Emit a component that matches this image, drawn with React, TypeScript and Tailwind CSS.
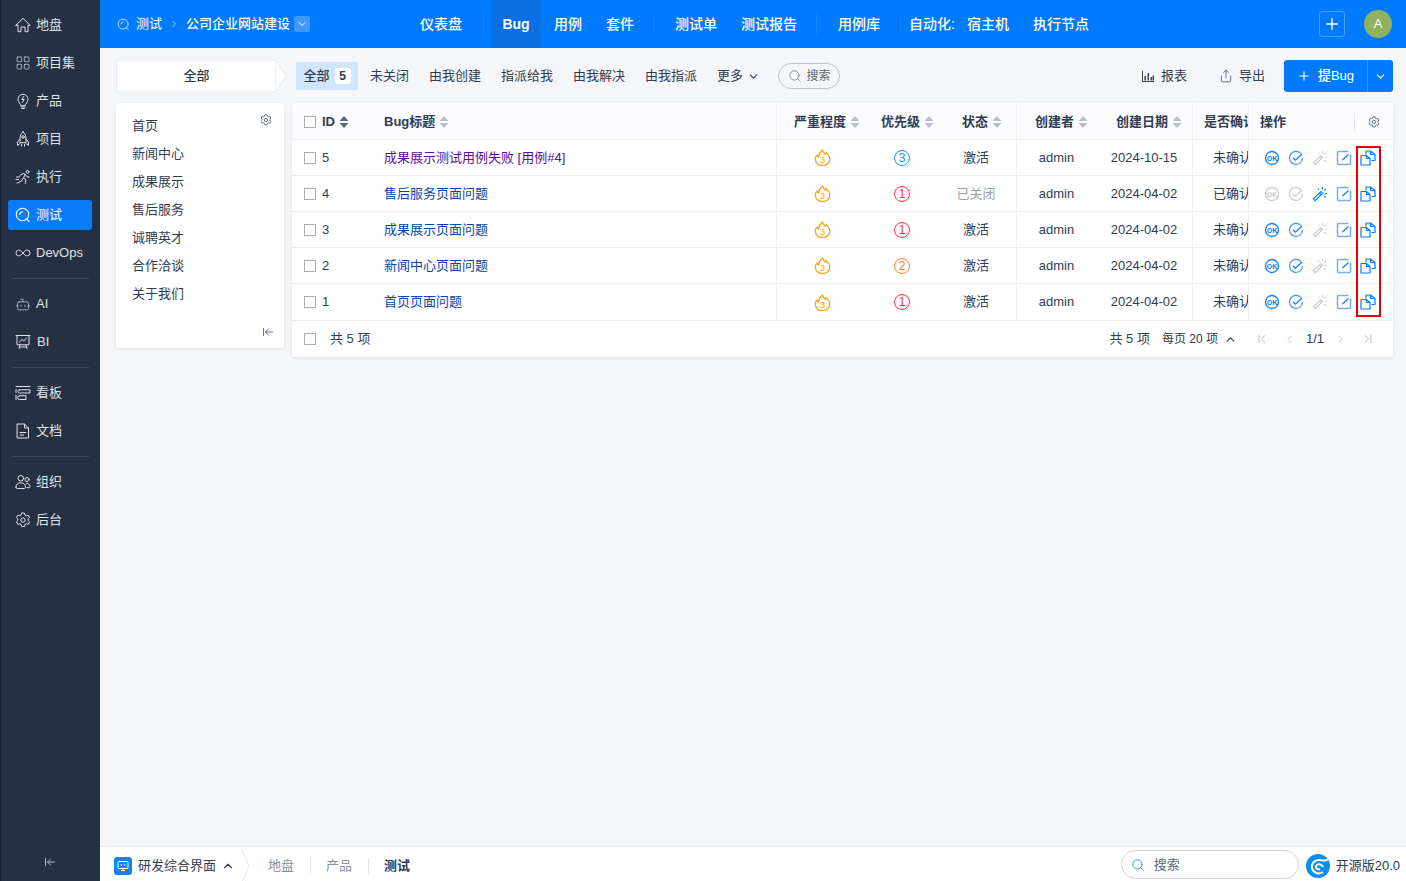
import React from "react";
import {
  LayoutGrid, Bot, Search,
  ChevronDown, ChevronUp, ChevronRight, ChevronLeft, ChevronFirst, ChevronLast, Plus, Share, ArrowLeftToLine,
} from "lucide-react";

const S = ({ children, w = 16 }: { children: React.ReactNode; w?: number }) => (
  <svg width={w} height="16" viewBox={`0 0 ${w} 16`} fill="none" stroke="currentColor" strokeWidth="1" strokeLinejoin="round" strokeLinecap="round">
    {children}
  </svg>
);
const Home = () => <S><path d="M.8 8.300L8 1.300l7.200 7H13v6.400h-3V10H6v4.700H3V8.300z" /></S>;
const Bulb = () => <S><path d="M5.800 12.300c0-1.700-2.800-2.700-2.800-6a5 5 0 0110 0c0 3.300-2.800 4.300-2.800 6zM6 14h4M6.800 15.500h2.400M8.700 3.500L6.800 6.500h2.400L7.300 9.300" /></S>;
const RocketUp = () => <S><path d="M8 .8c2 1.700 3 4 3 6.700v4.200H5V7.500C5 4.800 6 2.500 8 .8zM5 8l-2.500 3v3.300l2.500-1.600M11 8l2.500 3v3.300L11 12.700M6.500 13.500v1.700M9.500 13.500v1.700" /><circle cx="8" cy="6" r="1.300" /></S>;
const Running = () => <S><circle cx="12.500" cy="2.800" r="1.400" /><path d="M5 6.500l3-2 2.300.800L8.500 9l2.500 1.800-.8 3.700M8 9.500L6.500 12l-4.500 2.200M10.300 5.500l1.500 2.200 2.700.5M1.500 8h3M1 10.500h2.500" /></S>;
const Kanban = () => <S><path d="M1 1.500h14M1 4.500v3M4.500 4.800H15V8H4.500a1.600 1.600 0 010-3.200zM1 10v4.500M4.500 10.700H11v3.800H4.500a1.900 1.900 0 010-3.800z" /></S>;
const Loop = () => <S w={17}><path d="M8.500 8c-1.500-2-3-3-4.500-3a3 3 0 000 6c1.500 0 3-1 4.500-3zm0 0c1.500-2 3-3 4.500-3a3 3 0 010 6c-1.500 0-3-1-4.500-3z" /></S>;
const Bi = () => <S><path d="M1 1.500h14M2 1.500v9.300h12V1.500M5 10.800L4 14.500M11 10.800l1 3.700M4.500 13h7M4.500 8l2.500-2.500 1.800 1.500 2.700-3" /></S>;
const Doc = () => <S><path d="M2.500 1h7l4 4v10h-11zM9.500 1v4h4M5 9.500h6M5 12h3.500" /></S>;
const People = () => <S><circle cx="5.800" cy="4.300" r="2.800" /><circle cx="12" cy="5.500" r="2" /><path d="M1 13.200c0-3 2-4.400 4.800-4.400s4.800 1.400 4.800 4.400c0 .8-.6 1.300-1.300 1.300h-7C1.600 14.500 1 14 1 13.200zM11.500 9.300c2 0 3.500 1 3.500 3 0 .8-.5 1.300-1.300 1.300h-1.500" /></S>;
const Gear = ({ size = 16 }: { size?: number }) => (
  <svg width={size} height={size} viewBox="0 0 16 16" fill="none" stroke="currentColor" strokeWidth={size < 14 ? 1.200 : 1} strokeLinejoin="round">
    <path d="M6.600 1h2.800l.5 2 1.300.8 2-.6 1.400 2.400-1.500 1.400v1.500l1.500 1.400-1.400 2.400-2-.6-1.300.8-.5 2H6.600l-.5-2-1.300-.8-2 .6-1.400-2.400 1.500-1.400V7.000L1.400 5.600l1.400-2.400 2 .6 1.300-.8z" />
    <circle cx="8" cy="8" r="2.200" />
  </svg>
);
const Bug = ({ c = 16 }: { c?: number }) => (
  <svg width={c} height={c} viewBox="0 0 16 16" fill="none" stroke="currentColor" strokeWidth="1.100" strokeLinecap="round">
    <circle cx="7.500" cy="7.500" r="6.200" />
    <path d="M4.800 7.500a2.800 2.800 0 012.700-2.700M11 11.500l3 3" />
  </svg>
);

type Item = { t: string; i?: React.ReactNode; a?: boolean; d?: boolean };
const nav: Item[] = [
  { t: "地盘", i: <Home /> },
  { t: "项目集", i: <LayoutGrid size={16} strokeWidth={1} /> },
  { t: "产品", i: <Bulb /> },
  { t: "项目", i: <RocketUp /> },
  { t: "执行", i: <Running /> },
  { t: "测试", i: <Bug />, a: true },
  { t: "DevOps", i: <Loop /> },
  { t: "", d: true },
  { t: "AI", i: <Bot size={17} strokeWidth={1} /> },
  { t: "BI", i: <Bi /> },
  { t: "", d: true },
  { t: "看板", i: <Kanban /> },
  { t: "文档", i: <Doc /> },
  { t: "", d: true },
  { t: "组织", i: <People /> },
  { t: "后台", i: <Gear /> },
];

const Sort = ({ dark }: { dark?: boolean }) => (
  <svg width="10" height="12" viewBox="0 0 10 12" className="shrink-0">
    <path d="M5 0l4.500 5H.500z" fill={dark ? "#5a6578" : "#b9bfc9"} />
    <path d="M5 12L.500 7h9z" fill={dark ? "#5a6578" : "#b9bfc9"} />
  </svg>
);

const Flame = () => (
  <svg width="17" height="17" viewBox="0 0 17 17" fill="none" stroke="#ff9f0a" strokeWidth="1.200" strokeLinejoin="round">
    <path d="M8.600.8c.4 2.400 1.700 3.200 2.800 4.500.5-.5.700-1 .7-1.700 2 1.700 3.700 3.900 3.700 6.400 0 3.800-3.200 6.500-7.300 6.500S1.200 13.800 1.200 10.300c0-2 1-3.400 2.200-4.400 0 1 .3 1.600.9 2.100C4.800 5.500 6.600 2.600 8.600.8z" />
    <text x="8.500" y="13.700" textAnchor="middle" fontSize="9" fill="#ff9f0a" stroke="none" fontFamily="Liberation Sans">3</text>
  </svg>
);
const Pri = ({ n }: { n: number }) => {
  const c = n === 3 ? "border-[#1c8df0] text-[#1c8df0]" : n === 2 ? "border-[#f5821f] text-[#f5821f]" : "border-[#f33] text-[#f33]";
  return <span className={`flex h-4 w-4 items-center justify-center rounded-full border text-[12px] leading-none ${c}`}>{n}</span>;
};

const OkI = ({ on }: { on: boolean }) => (
  <svg width="16" height="16" viewBox="0 0 16 16" fill="none" stroke={on ? "#0c7dfa" : "#c6c9cf"} strokeWidth="1.300">
    <circle cx="8" cy="8" r="6.500" />
    <text x="8" y="10.500" textAnchor="middle" fontSize="7" fontWeight="700" fill={on ? "#0c7dfa" : "#c6c9cf"} stroke="none" fontFamily="Liberation Sans">OK</text>
  </svg>
);
const CheckI = ({ on }: { on: boolean }) => (
  <svg width="16" height="16" viewBox="0 0 16 16" fill="none" stroke={on ? "#0c7dfa" : "#c6c9cf"} strokeWidth="1.200">
    <path d="M12.800 3.500A6.500 6.500 0 1014.500 8" stroke={on ? "#3d97fb" : "#c6c9cf"} />
    <path d="M5 7.800l2.500 2.400L14 4" />
  </svg>
);
const Wand = ({ on }: { on: boolean }) => (
  <svg width="16" height="16" viewBox="0 0 16 16" fill="none" stroke={on ? "#0c7dfa" : "#c6c9cf"} strokeWidth="1.100">
    <path d="M1.200 12.800l7.800-7.300 1.700 1.700-7.500 7.500zM7.500 7l1.800 1.800M6 2.500l1 1.500M10.500 1v2.200M14 3l-1.700 1.500M15 7.500h-2.200M13.500 11.500L12 10" />
  </svg>
);
const Edit = () => (
  <svg width="16" height="16" viewBox="0 0 16 16" fill="none" strokeWidth="1.500">
    <path d="M12.500 1.500H2.500a1 1 0 00-1 1v11a1 1 0 001 1h11a1 1 0 001-1V4.500" stroke="#6eb2fb" />
    <path d="M6.500 10l6-5.500" stroke="#0c7dfa" strokeWidth="1.200" />
  </svg>
);
const Copy = () => (
  <svg width="16" height="16" viewBox="0 0 16 16" fill="none" stroke="#0c7dfa" strokeWidth="1.200" strokeLinejoin="round">
    <path d="M6 4.500V1h4.500L15 4.500V10.500h-3.500M10.500 1v3.500H15" />
    <path d="M1 5.500h5.500L10 8.500v6.500H1zM6.500 5.500v3H10" />
  </svg>
);

const rows = [
  { id: 5, t: "成果展示测试用例失败 [用例#4]", v: true, p: 3, s: "激活", d: "2024-10-15", c: "未确认" },
  { id: 4, t: "售后服务页面问题", p: 1, s: "已关闭", d: "2024-04-02", c: "已确认" },
  { id: 3, t: "成果展示页面问题", p: 1, s: "激活", d: "2024-04-02", c: "未确认" },
  { id: 2, t: "新闻中心页面问题", p: 2, s: "激活", d: "2024-04-02", c: "未确认" },
  { id: 1, t: "首页页面问题", p: 1, s: "激活", d: "2024-04-02", c: "未确认" },
];

const Box = () => <span className="h-3 w-3 shrink-0 border border-[#a9afba] bg-white" />;
const cols = "grid grid-cols-[84px_401px_91px_68px_81px_79px_97px_55px_1fr]";
const Sep = () => <span className="block h-5 w-px bg-[#1587fe]" />;

export default function App() {
  return (
    <div className="flex h-[881px] w-[1406px] overflow-hidden bg-[#f5f6f9] font-['Liberation_Sans','Noto_Sans_CJK_SC',sans-serif] text-[13px] text-[#313c52]">
      {/* sidebar */}
      <aside className="flex w-[100px] shrink-0 flex-col border-l border-[#1c2634] bg-[#253142] pt-[6px] text-[#dfe2e6]">
        {nav.map((n, i) =>
          n.d ? (
            <div key={i} className="mx-[11px] my-[6px] h-px bg-[#3e4959]" />
          ) : (
            <div key={i} className="flex h-[38px] items-center pl-[7px]">
              <div className={`flex h-[30px] w-[84px] items-center gap-[5px] rounded-[3px] pl-[7px] ${n.a ? "bg-[#0a7bfb] text-white" : ""}`}>
                <span className="flex w-4 justify-center">{n.i}</span>
                <span className={n.t === "BI" ? "pl-[1px]" : ""}>{n.t}</span>
              </div>
            </div>
          ),
        )}
        <div className="mt-auto flex h-[38px] items-center justify-center pr-[2px] text-[#b6bcc5]">
          <ArrowLeftToLine size={12} />
        </div>
      </aside>

      <div className="flex min-w-0 flex-1 flex-col">
        {/* top bar */}
        <header className="flex h-12 shrink-0 items-center bg-[#007afe] text-white">
          <div className="flex w-[320px] items-center pl-[17px]">
            <span className="text-[#dbe9ff]"><Bug c={13} /></span>
            <span className="ml-[6px]">测试</span>
            <ChevronRight size={12} className="ml-[6px] text-[#a9d0ff]" />
            <span className="ml-[6px] font-medium">公司企业网站建设</span>
            <span className="ml-[4px] flex h-4 w-4 items-center justify-center rounded-[2px] bg-[#3f99fe]"><ChevronDown size={12} /></span>
          </div>
          <nav className="flex h-full items-center text-[14px] font-medium">
            <span>仪表盘</span>
            <span className="ml-[21px]"><Sep /></span>
            <span className="ml-[7px] flex h-full w-[50px] items-center justify-center bg-[#0a6fe0] font-bold">Bug</span>
            <span className="ml-[13px]">用例</span>
            <span className="ml-[24px]">套件</span>
            <span className="ml-[19px]"><Sep /></span>
            <span className="ml-[21px]">测试单</span>
            <span className="ml-[24px]">测试报告</span>
            <span className="ml-[19px]"><Sep /></span>
            <span className="ml-[21px]">用例库</span>
            <span className="ml-[20px]"><Sep /></span>
            <span className="ml-[8px]">自动化:</span>
            <span className="ml-[12px]">宿主机</span>
            <span className="ml-[24px]">执行节点</span>
          </nav>
          <div className="ml-auto flex items-center pr-[14px]">
            <span className="flex h-[26px] w-[26px] items-center justify-center rounded-[3px] border border-[#4da0fe]"><Plus size={18} /></span>
            <span className="ml-[19px] flex h-7 w-7 items-center justify-center rounded-full bg-[#8fb35c] text-[13px] font-medium">A</span>
          </div>
        </header>

        {/* main */}
        <main className="min-h-0 flex-1 pl-[16px] pr-[13px] pt-3">
          <div className="flex h-8 items-center">
            <div className="relative h-8 w-[160px] shrink-0 rounded-l-[2px] border-y border-l border-[#e6e9ef] bg-white text-center font-medium leading-[30px]">
              全部
              <svg className="absolute -right-[11px] -top-px" width="12" height="32" viewBox="0 0 12 32">
                <path d="M0 .5h.5L11 16 .500 31.500H0z" fill="#fff" stroke="#e6e9ef" />
              </svg>
            </div>
            <div className="ml-[20px] flex h-7 w-[62px] items-center justify-center gap-[5px] rounded-[2px] bg-[#cfe6fd] font-medium">
              全部
              <span className="flex h-4 w-4 items-center justify-center rounded-[3px] bg-white text-[12px] font-bold">5</span>
            </div>
            <span className="ml-[12px]">未关闭</span>
            <span className="ml-[20px]">由我创建</span>
            <span className="ml-[20px]">指派给我</span>
            <span className="ml-[20px]">由我解决</span>
            <span className="ml-[20px]">由我指派</span>
            <span className="ml-[20px] flex items-center gap-[4px]">更多<ChevronDown size={13} /></span>
            <span className="ml-[18px] flex h-[26px] w-[62px] items-center justify-center gap-[5px] rounded-full border border-[#bcc3cf] text-[12px] text-[#5e6878]">
              <Search size={14} strokeWidth={1.2} />搜索
            </span>
            <span className="ml-auto flex items-center gap-[6px]">
              <svg width="14" height="14" viewBox="0 0 14 14" fill="#3c4657"><path d="M1 2h1v10h11v1H1zM3.500 7H5v4.500H3.500zM6.500 4h1.500v7.500H6.500zM9.500 8H11v3.500H9.500zM11.500 6.500h1.500v5h-1.500z" /></svg>
              报表
            </span>
            <span className="ml-[32px] flex items-center gap-[6px]">
              <Share size={14} strokeWidth={1.2} />
              导出
            </span>
            <div className="ml-[19px] flex h-8 w-[109px] items-center rounded-[3px] bg-[#007afe] font-medium text-white">
              <span className="flex w-[83px] items-center justify-center gap-[7px]"><Plus size={14} />提Bug</span>
              <span className="h-full w-px bg-[#3a97fe]" />
              <span className="flex flex-1 items-center justify-center"><ChevronDown size={13} /></span>
            </div>
          </div>

          <div className="mt-[11px] flex items-start gap-[8px]">
            {/* tree */}
            <div className="relative h-[245px] w-[168px] shrink-0 rounded-[2px] bg-white pb-2 pl-4 pt-[9px] shadow-[0_1px_3px_rgba(0,0,0,0.1)]">
              {["首页", "新闻中心", "成果展示", "售后服务", "诚聘英才", "合作洽谈", "关于我们"].map((t) => (
                <div key={t} className="flex h-7 items-center">{t}</div>
              ))}
              <span className="absolute right-[12px] top-[11px] text-[#5e6878]"><Gear size={12} /></span>
              <ArrowLeftToLine size={12} className="absolute bottom-[10px] right-[10px] text-[#62718a]" />
            </div>

            {/* table */}
            <div className="relative w-[1101px] rounded-[2px] bg-white shadow-[0_1px_3px_rgba(0,0,0,0.1)]">
              <div className={`${cols} h-[37px] items-center border-b border-[#eceef2] bg-[#fcfcfe] font-bold`}>
                <div className="flex h-full items-center pl-3 pt-[2px]"><Box /><span className="ml-[6px]">ID</span><span className="ml-[4px]"><Sort dark /></span></div>
                <div className="flex h-full items-center gap-[4px] border-r border-[#eceef2] pl-2 pt-[2px]">Bug标题<Sort /></div>
                <div className="flex h-full items-center gap-[4px] pl-[17px] pt-[2px]">严重程度<Sort /></div>
                <div className="flex h-full items-center gap-[4px] pl-[13px] pt-[2px]">优先级<Sort /></div>
                <div className="flex h-full items-center gap-[4px] border-r border-[#eceef2] pl-[26px] pt-[2px]">状态<Sort /></div>
                <div className="flex h-full items-center gap-[4px] pl-[18px] pt-[2px]">创建者<Sort /></div>
                <div className="flex h-full items-center gap-[4px] border-r border-[#eceef2] pl-[20px] pt-[2px]">创建日期<Sort /></div>
                <div className="flex h-full items-center overflow-hidden whitespace-nowrap pl-[11px] pt-[2px]">是否确认</div>
                <div className="flex h-full items-center border-l border-[#eceef2] pl-[11px] pt-[2px]">
                  操作
                  <span className="ml-auto mr-[13px] flex h-[18px] items-center border-l border-[#e3e6eb] pl-[13px] font-normal text-[#5e6878]"><Gear size={12} /></span>
                </div>
              </div>
              {rows.map((r, idx) => {
                const closed = r.s === "已关闭";
                return (
                  <div key={r.id} className={`${cols} h-[36px] items-center ${idx < 4 ? "border-b border-[#eceef2]" : ""}`}>
                    <div className="flex items-center pl-3"><Box /><span className="ml-[6px]">{r.id}</span></div>
                    <div className={`flex h-full items-center border-r border-[#eceef2] pl-2 ${r.v ? "text-[#5b0f9e]" : "text-[#0a45a8]"}`}>{r.t}</div>
                    <div className="flex justify-center"><Flame /></div>
                    <div className="flex justify-center"><Pri n={r.p} /></div>
                    <div className={`flex h-full items-center justify-center border-r border-[#eceef2] ${closed ? "text-[#9aa1ad]" : ""}`}>{r.s}</div>
                    <div className="text-center">admin</div>
                    <div className="flex h-full items-center justify-center border-r border-[#eceef2]">{r.d}</div>
                    <div className="overflow-hidden whitespace-nowrap pl-[20px]">{r.c}</div>
                    <div className="flex h-full items-center gap-2 border-l border-[#eceef2] pl-[15px]">
                      <OkI on={!closed} />
                      <CheckI on={!closed} />
                      <Wand on={closed} />
                      <Edit />
                      <Copy />
                    </div>
                  </div>
                );
              })}
              <div className="flex h-[37px] items-center border-t border-[#eceef2] pl-3 pr-[18px]">
                <Box />
                <span className="ml-[14px]">共 5 项</span>
                <span className="ml-auto">共 5 项</span>
                <span className="ml-3 flex items-center gap-[6px] text-[12px]">每页 20 项<ChevronUp size={13} /></span>
                <span className="ml-[18px] flex items-center text-[#a9afba]">
                  <ChevronFirst size={14} strokeWidth={1.5} />
                  <ChevronLeft size={13} strokeWidth={1.5} className="ml-[14px]" />
                  <span className="mx-[10px] text-[#313c52]">1/1</span>
                  <ChevronRight size={13} strokeWidth={1.5} />
                  <ChevronLast size={14} strokeWidth={1.5} className="ml-[14px]" />
                </span>
              </div>
              <div className="absolute left-[1064px] top-[43px] h-[171px] w-[25px] border-2 border-[#e60000]" />
            </div>
          </div>
        </main>

        {/* footer */}
        <footer className="flex h-[35px] shrink-0 items-center border-t border-[#e8ebf0] bg-white pr-[6px] pt-[3px]">
          <span className="ml-[14px] flex h-[18px] w-[18px] items-center justify-center rounded-[3px] bg-[#0a85fb] text-white">
            <svg width="12" height="12" viewBox="0 0 12 12" fill="none" stroke="currentColor" strokeWidth="1"><rect x="1" y="1.500" width="10" height="7" rx="1" /><path d="M4 10.500h4M6 8.500v2M4.800 4l-1 1 1 1M7.200 4l1 1-1 1" /></svg>
          </span>
          <span className="ml-[6px]">研发综合界面</span>
          <ChevronUp size={14} className="ml-[5px]" />
          <svg className="ml-[6px]" width="9" height="32" viewBox="0 0 9 32" fill="none" stroke="#e3e6eb"><path d="M1 0l7 16-7 16" /></svg>
          <span className="ml-[18px] text-[#8a919e]">地盘</span>
          <span className="ml-[16px] h-4 w-px bg-[#e3e6eb]" />
          <span className="ml-[15px] text-[#8a919e]">产品</span>
          <span className="ml-[16px] h-4 w-px bg-[#e3e6eb]" />
          <span className="ml-[15px] font-bold">测试</span>
          <span className="ml-auto -mt-[2px] flex h-[29px] w-[178px] items-center rounded-full border border-[#cad3e3] pl-[9px] text-[#5e6878]">
            <Search size={14} className="text-[#1c7ef0]" strokeWidth={1.4} />
            <span className="ml-[9px]">搜索</span>
          </span>
          <svg className="ml-[7px]" width="24" height="24" viewBox="0 0 24 24" fill="none">
            <circle cx="12" cy="12" r="12" fill="#0a8ff0" />
            <path d="M22 5c-2 3-5 1-9 1-5 0-8 4-7 8 1 5 7 7 11 4" stroke="#fff" strokeWidth="2" />
            <path d="M17 13c-1-3-6-4-7-1-1 2 2 4 4 3" stroke="#fff" strokeWidth="2" />
          </svg>
          <span className="ml-[6px]">开源版20.0</span>
        </footer>
      </div>
    </div>
  );
}
